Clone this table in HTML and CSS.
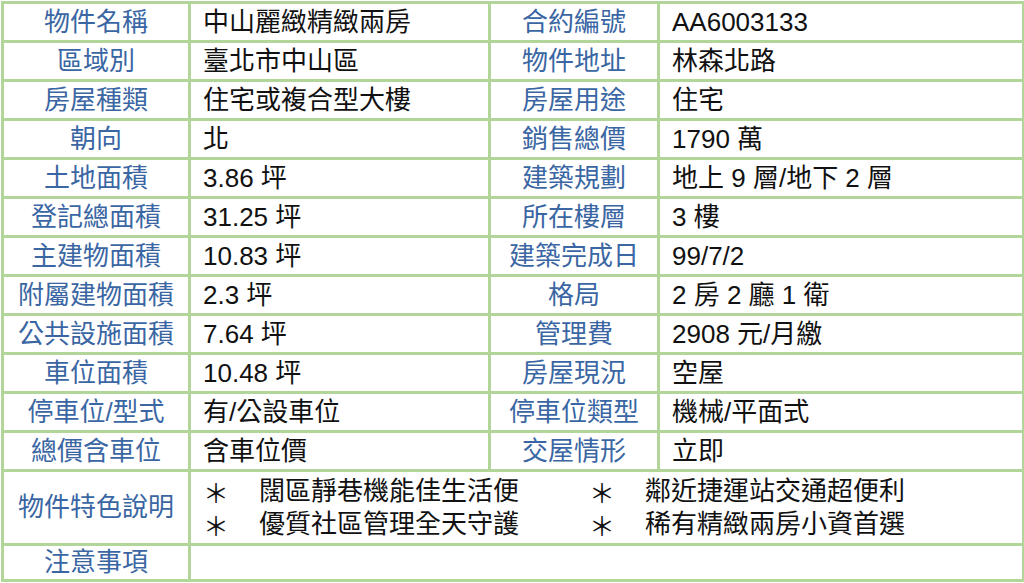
FILE: index.html
```html
<!DOCTYPE html>
<html lang="zh-Hant">
<head>
<meta charset="utf-8">
<title>物件資料</title>
<link rel="stylesheet" href="styles.css">
</head>
<body>
<table class="sheet">
  <colgroup>
    <col class="c-label1">
    <col class="c-val1">
    <col class="c-label2">
    <col class="c-val2">
  </colgroup>
  <tbody>
    <tr><th>物件名稱</th><td>中山麗緻精緻兩房</td><th>合約編號</th><td>AA6003133</td></tr>
    <tr><th>區域別</th><td>臺北市中山區</td><th>物件地址</th><td>林森北路</td></tr>
    <tr><th>房屋種類</th><td>住宅或複合型大樓</td><th>房屋用途</th><td>住宅</td></tr>
    <tr><th>朝向</th><td>北</td><th>銷售總價</th><td>1790 萬</td></tr>
    <tr><th>土地面積</th><td>3.86 坪</td><th>建築規劃</th><td>地上 9 層/地下 2 層</td></tr>
    <tr><th>登記總面積</th><td>31.25 坪</td><th>所在樓層</th><td>3 樓</td></tr>
    <tr><th>主建物面積</th><td>10.83 坪</td><th>建築完成日</th><td>99/7/2</td></tr>
    <tr><th>附屬建物面積</th><td>2.3 坪</td><th>格局</th><td>2 房 2 廳 1 衛</td></tr>
    <tr><th>公共設施面積</th><td>7.64 坪</td><th>管理費</th><td>2908 元/月繳</td></tr>
    <tr><th>車位面積</th><td>10.48 坪</td><th>房屋現況</th><td>空屋</td></tr>
    <tr><th>停車位/型式</th><td>有/公設車位</td><th>停車位類型</th><td>機械/平面式</td></tr>
    <tr><th>總價含車位</th><td>含車位價</td><th>交屋情形</th><td>立即</td></tr>
    <tr class="row-features">
      <th>物件特色說明</th>
      <td colspan="3">
        <ul class="features">
          <li><span class="star">＊</span><span>闊區靜巷機能佳生活便</span></li>
          <li><span class="star">＊</span><span>鄰近捷運站交通超便利</span></li>
          <li><span class="star">＊</span><span>優質社區管理全天守護</span></li>
          <li><span class="star">＊</span><span>稀有精緻兩房小資首選</span></li>
        </ul>
      </td>
    </tr>
    <tr class="row-notes"><th>注意事項</th><td colspan="3"></td></tr>
  </tbody>
</table>
</body>
</html>
```

FILE: styles.css
```css
html, body {
  margin: 0;
  padding: 0;
  background: #ffffff;
}

body {
  padding: 1px 0 0 1px;
  font-family: "Liberation Sans", "Noto Sans CJK TC", sans-serif;
  font-size: 26px;
  color: #111111;
}

.sheet {
  border-collapse: collapse;
  table-layout: fixed;
  width: 1021px;
  border: 3px solid #b2d69a;
}

.c-label1 { width: 187px; }
.c-val1 { width: 300px; }
.c-label2 { width: 169px; }
.c-val2 { width: 365px; }

.sheet th,
.sheet td {
  border: 3px solid #b2d69a;
  height: 36px;
  padding: 0 0 0 12px;
  line-height: 33px;
  vertical-align: middle;
  white-space: nowrap;
  overflow: hidden;
}

.sheet th {
  font-weight: normal;
  color: #3a66a3;
  text-align: center;
  padding: 0;
}

.sheet td {
  text-align: left;
}

.row-features th,
.row-features td {
  height: 71px;
}

.row-notes th,
.row-notes td {
  height: 33px;
}

.features {
  list-style: none;
  margin: 0;
  padding: 0;
  display: grid;
  grid-template-columns: 386px 1fr;
  line-height: 33px;
}

.features li {
  display: flex;
  align-items: center;
}

.star {
  width: 26px;
  margin-right: 30px;
  font-family: "Noto Sans CJK TC", sans-serif;
  text-align: center;
}
```
